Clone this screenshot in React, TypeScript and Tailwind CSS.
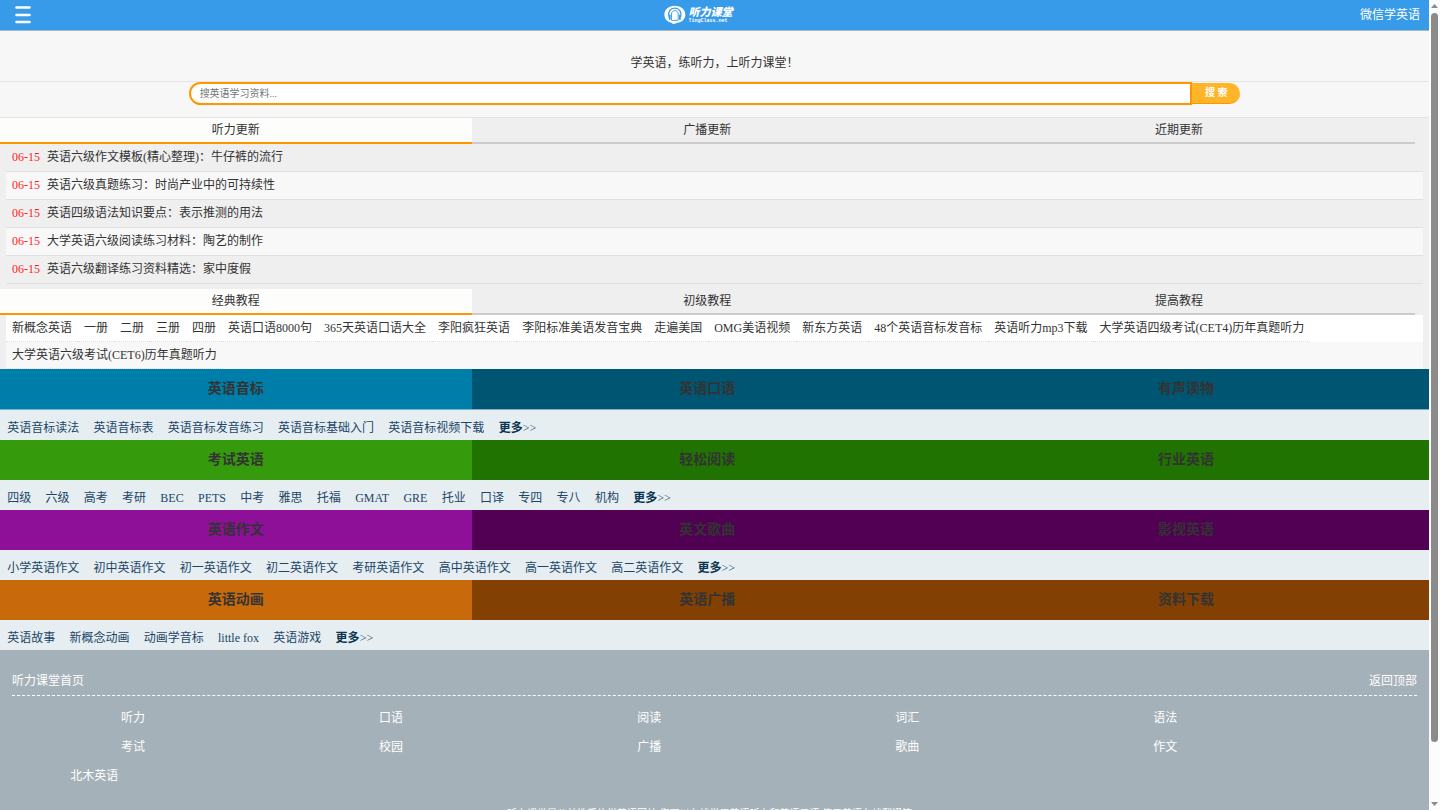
type NewsItem = { date: string; title: string };
type Channel = {
  names: string[];
  active: string;
  rest: string;
  line: string;
  links: string[];
};

const news: NewsItem[] = [
  { date: '06-15', title: '英语六级作文模板(精心整理)：牛仔裤的流行' },
  { date: '06-15', title: '英语六级真题练习：时尚产业中的可持续性' },
  { date: '06-15', title: '英语四级语法知识要点：表示推测的用法' },
  { date: '06-15', title: '大学英语六级阅读练习材料：陶艺的制作' },
  { date: '06-15', title: '英语六级翻译练习资料精选：家中度假' },
];

const courseRows: string[][] = [
  [
    '新概念英语', '一册', '二册', '三册', '四册', '英语口语8000句', '365天英语口语大全',
    '李阳疯狂英语', '李阳标准美语发音宝典', '走遍美国', 'OMG美语视频', '新东方英语',
    '48个英语音标发音标', '英语听力mp3下载', '大学英语四级考试(CET4)历年真题听力',
  ],
  ['大学英语六级考试(CET6)历年真题听力'],
];

const channels: Channel[] = [
  {
    names: ['英语音标', '英语口语', '有声读物'],
    active: 'bg-[#007eaa]',
    rest: 'bg-[#005672]',
    line: 'border-t border-[#7fb0c6]',
    links: ['英语音标读法', '英语音标表', '英语音标发音练习', '英语音标基础入门', '英语音标视频下载'],
  },
  {
    names: ['考试英语', '轻松阅读', '行业英语'],
    active: 'bg-[#359a0c]',
    rest: 'bg-[#207300]',
    line: '',
    links: ['四级', '六级', '高考', '考研', 'BEC', 'PETS', '中考', '雅思', '托福', 'GMAT', 'GRE', '托业', '口译', '专四', '专八', '机构'],
  },
  {
    names: ['英语作文', '英文歌曲', '影视英语'],
    active: 'bg-[#8e0f98]',
    rest: 'bg-[#510053]',
    line: '',
    links: ['小学英语作文', '初中英语作文', '初一英语作文', '初二英语作文', '考研英语作文', '高中英语作文', '高一英语作文', '高二英语作文'],
  },
  {
    names: ['英语动画', '英语广播', '资料下载'],
    active: 'bg-[#c8690b]',
    rest: 'bg-[#824103]',
    line: '',
    links: ['英语故事', '新概念动画', '动画学音标', 'little fox', '英语游戏'],
  },
];

const footerLinks = ['听力', '口语', '阅读', '词汇', '语法', '考试', '校园', '广播', '歌曲', '作文'];

function Logo() {
  return (
    <a href="#home" className="flex items-center gap-0.5 text-white" aria-label="听力课堂">
      <svg width="22" height="20" viewBox="0 0 23 20" aria-hidden="true">
        <path d="M11.3 0.3C17.6 0.3 22.3 4.2 22.3 9.4c0 4.8-3.4 8.1-8.6 8.9-1.8.5-3.4 1.2-5.4 1.1.5-.4.8-.7.9-1.1C3.8 17.8.4 14.2.4 9.4.4 4.2 5 .3 11.3.3z" fill="#fff" />
        <path d="M5.4 12.5C3.600 6.400 7 2.900 11.300 2.900s7.700 3.500 5.900 9.600" fill="none" stroke="#389bea" strokeWidth="1.300" />
        <path d="M7.800 15.400V9c0-2.200 1.600-3.600 3.500-3.600s3.500 1.400 3.500 3.600v6.400" fill="none" stroke="#389bea" strokeWidth="1" />
        <path d="M6 10.300v4M16.600 10.300v4" stroke="#389bea" strokeWidth="1.900" strokeLinecap="round" />
        <path d="M8 15.600h6.600" stroke="#389bea" strokeWidth="1" />
      </svg>
      <span className="flex flex-col">
        <span className="text-[11px] leading-3 font-black italic">听力课堂</span>
        <span className="font-['Liberation_Mono',monospace] text-[5px] leading-[6px] font-bold">TingClass.net</span>
      </span>
    </a>
  );
}

function Tabs({ items }: { items: string[] }) {
  return (
    <div role="tablist" className="flex">
      {items.map((item, i) => (
        <button
          key={item}
          type="button"
          role="tab"
          aria-selected={i === 0}
          className={
            i === 0
              ? 'h-[26px] w-[33%] border-b-2 border-[#ff9600] bg-[#fdfdfc] leading-6'
              : 'h-[26px] w-[33%] border-b-2 border-[#cccccc] leading-6'
          }
        >
          {item}
        </button>
      ))}
    </div>
  );
}

function ChannelBlock({ channel }: { channel: Channel }) {
  return (
    <section>
      <div className={`flex text-sm leading-10 font-bold ${channel.rest}`}>
        {channel.names.map((name, i) => (
          <a
            key={name}
            href="#channel"
            className={i === 0 ? `w-[33%] text-center ${channel.active}` : i === 1 ? 'w-[33%] text-center' : 'flex-1 text-center'}
          >
            {name}
          </a>
        ))}
      </div>
      <div className={`flex flex-wrap bg-[#e6eef1] text-[#1c4568] ${channel.line}`}>
        {channel.links.map((link) => (
          <a key={link} href="#topic" className="px-[0.5%] pt-1.5 leading-6">
            {link}
          </a>
        ))}
        <a href="#more" className="px-[0.5%] pt-1.5 leading-6">
          <b className="text-[#0b3553]">更多</b>&gt;&gt;
        </a>
      </div>
    </section>
  );
}

export default function App() {
  return (
    <div className="flex h-screen overflow-hidden bg-[#efefef] font-['Liberation_Serif','Noto_Sans_CJK_SC',serif] text-xs text-[#333333]">
      <div className="min-w-0 flex-1 overflow-hidden">
        <header className="grid h-[31px] grid-cols-3 items-center border-b border-[#a9b9c4] bg-[#389bea] text-white">
          <button type="button" aria-label="菜单" className="ml-[15px] w-4">
            <svg width="16" height="18" viewBox="0 0 16 18" aria-hidden="true">
              <path d="M1.500 1.500h13M1.500 9h13M1.500 16h13" stroke="#fff" strokeWidth="2.600" strokeLinecap="round" />
            </svg>
          </button>
          <div className="-ml-8 flex justify-center">
            <Logo />
          </div>
          <a href="#wechat" className="mr-[9px] justify-self-end">微信学英语</a>
        </header>

        <p className="border-b border-[#e4e4e4] bg-[#f7f7f7] pt-5 pb-[6px] text-center leading-6">
          学英语，练听力，上听力课堂！
        </p>

        <div className="border-b border-[#e4e4e4] bg-[#f7f7f7] pb-3">
          <form className="mx-auto flex w-[73.6%] items-center text-[10px]">
            <input
              type="text"
              aria-label="搜英语学习资料"
              placeholder="搜英语学习资料..."
              className="h-[23px] min-w-0 flex-1 rounded-l-full border-2 border-[#ff9600] bg-white px-[9px] outline-none placeholder:text-[#757575]"
            />
            <button type="button" className="h-[21px] w-12 rounded-r-full border-b border-[#ff9600] bg-[#ffb527] font-bold text-white">
              搜 索
            </button>
          </form>
        </div>

        <section className="pb-[5px]">
          <Tabs items={['听力更新', '广播更新', '近期更新']} />
          <ul className="mx-1.5">
            {news.map((item) => (
              <li key={item.title} className="flex h-7 gap-[7px] border-b border-[#e0e0e0] px-1.5 leading-[26px] even:bg-[#f8f8f8]">
                <span className="text-[#ff1f1f]">{item.date}</span>
                <a href="#news">{item.title}</a>
              </li>
            ))}
          </ul>
        </section>

        <section>
          <Tabs items={['经典教程', '初级教程', '提高教程']} />
          <div className="mx-1.5">
            {courseRows.map((row) => (
              <div key={row[0]} className="flex bg-white even:bg-[#f8f8f8]">
                {row.map((course) => (
                  <a key={course} href="#course" className="h-[27px] border-b border-dotted border-[#dddddd] px-1.5 leading-[26px] whitespace-nowrap">
                    {course}
                  </a>
                ))}
              </div>
            ))}
          </div>
        </section>

        {channels.map((channel) => (
          <ChannelBlock key={channel.names[0]} channel={channel} />
        ))}

        <footer className="bg-[#a4b1b8] pt-[19px] text-white">
          <div className="mx-3 flex justify-between border-b border-dashed border-white pb-0.5 leading-6">
            <a href="#home">听力课堂首页</a>
            <a href="#top">返回顶部</a>
          </div>
          <nav className="ml-1 grid w-[90.3%] grid-cols-5 gap-y-[5px] pt-[10px] text-center leading-6">
            {footerLinks.map((link) => (
              <a key={link} href="#section">
                {link}
              </a>
            ))}
            <a href="#beimu" className="w-[70%]">北木英语</a>
          </nav>
          <p className="pt-4 text-center text-[10px] leading-5">
            听力课堂是公益性质的学英语网站,您可以在线学习英语听力和英语口语,使用英语在线翻译等。
          </p>
        </footer>
      </div>

      <div aria-hidden="true" className="flex w-[11px] shrink-0 flex-col items-center bg-[#fcfcfc] py-1">
        <svg width="7" height="4" viewBox="0 0 7 4">
          <path d="M3.500 0L7 4H0z" fill="#8b8b8b" />
        </svg>
        <div className="my-[5px] flex w-[7px] flex-1 flex-col">
          <div className="h-[93%] rounded-full bg-[#8b8b8b]" />
        </div>
        <svg width="7" height="4" viewBox="0 0 7 4">
          <path d="M0 0h7L3.500 4z" fill="#8b8b8b" />
        </svg>
      </div>
    </div>
  );
}
